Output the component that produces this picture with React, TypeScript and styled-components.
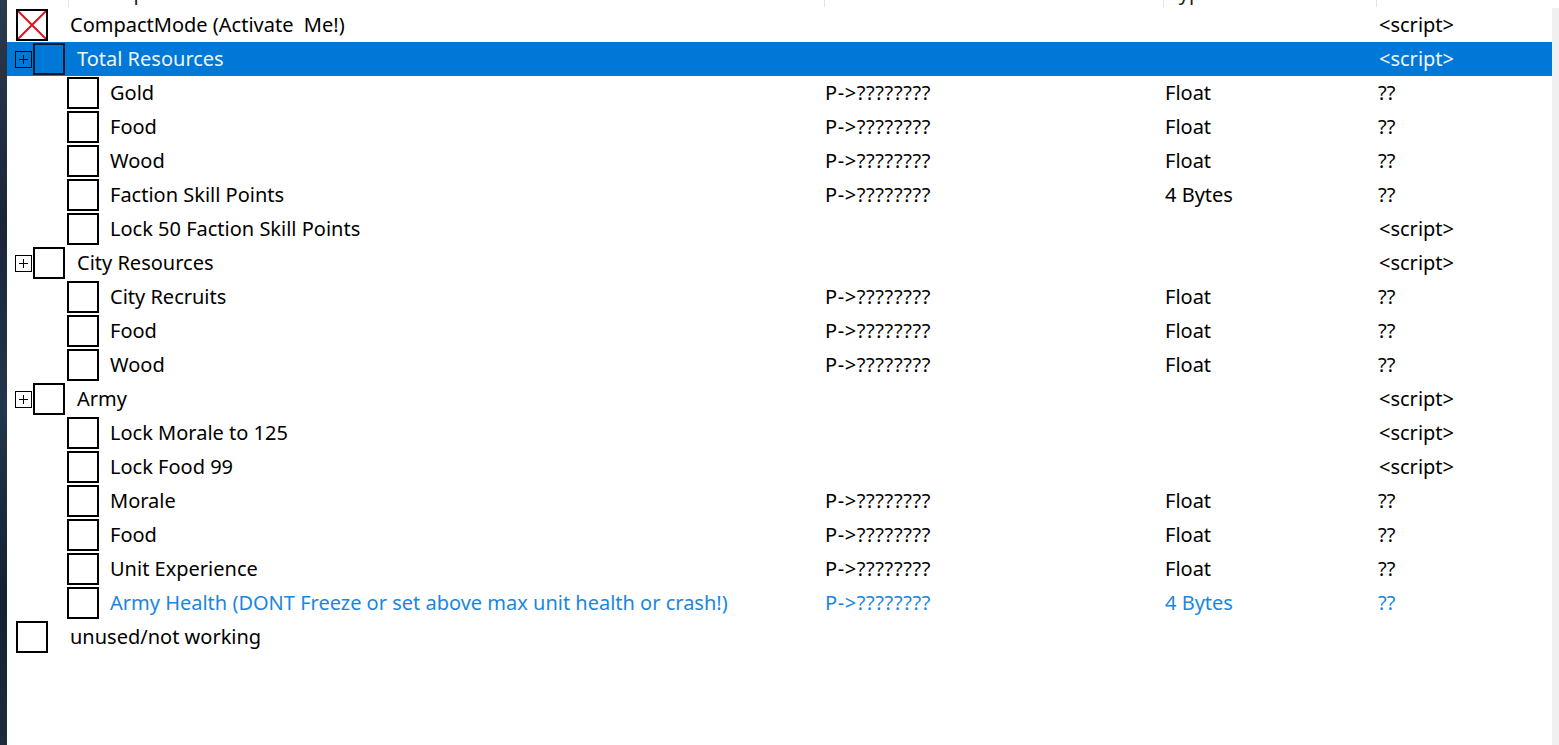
import React from 'react'
import styled, { createGlobalStyle } from 'styled-components'

const GlobalStyle = createGlobalStyle`
  html, body {
    margin: 0;
    padding: 0;
    background: #ffffff;
  }
  body {
    font-family: "Noto Sans", "Open Sans", sans-serif;
    font-size: 20px;
    color: #000;
  }
`

const COLUMNS = '818px 339px 213px 1fr'

type Kind = 'top' | 'group' | 'child'

interface IEntry {
  kind: Kind
  label: string
  address?: string
  type?: string
  value?: string
  checked?: boolean
  selected?: boolean
  tint?: boolean
}

const ptr = 'P->????????'

const entries: IEntry[] = [
  { kind: 'top', label: 'CompactMode (Activate  Me!)', value: '<script>', checked: true },
  { kind: 'group', label: 'Total Resources', value: '<script>', selected: true },
  { kind: 'child', label: 'Gold', address: ptr, type: 'Float', value: '??' },
  { kind: 'child', label: 'Food', address: ptr, type: 'Float', value: '??' },
  { kind: 'child', label: 'Wood', address: ptr, type: 'Float', value: '??' },
  { kind: 'child', label: 'Faction Skill Points', address: ptr, type: '4 Bytes', value: '??' },
  { kind: 'child', label: 'Lock 50 Faction Skill Points', value: '<script>' },
  { kind: 'group', label: 'City Resources', value: '<script>' },
  { kind: 'child', label: 'City Recruits', address: ptr, type: 'Float', value: '??' },
  { kind: 'child', label: 'Food', address: ptr, type: 'Float', value: '??' },
  { kind: 'child', label: 'Wood', address: ptr, type: 'Float', value: '??' },
  { kind: 'group', label: 'Army', value: '<script>' },
  { kind: 'child', label: 'Lock Morale to 125', value: '<script>' },
  { kind: 'child', label: 'Lock Food 99', value: '<script>' },
  { kind: 'child', label: 'Morale', address: ptr, type: 'Float', value: '??' },
  { kind: 'child', label: 'Food', address: ptr, type: 'Float', value: '??' },
  { kind: 'child', label: 'Unit Experience', address: ptr, type: 'Float', value: '??' },
  {
    kind: 'child',
    label: 'Army Health (DONT Freeze or set above max unit health or crash!)',
    address: ptr,
    type: '4 Bytes',
    value: '??',
    tint: true,
  },
  { kind: 'top', label: 'unused/not working' },
]

const Page = styled.div`
  display: flex;
  height: 745px;
  overflow: hidden;
`

const Backdrop = styled.div`
  width: 7px;
  flex-shrink: 0;
  background: linear-gradient(180deg, #2b3a4c 0%, #1a2636 30%, #24364a 55%, #142130 80%, #1d2b3b 100%);
`

const Main = styled.div`
  flex: 1;
  display: flex;
  flex-direction: column;
  min-width: 0;
`

const Header = styled.div`
  height: 8px;
  flex-shrink: 0;
  display: grid;
  grid-template-columns: 62px 756px 339px 213px 1fr;
  overflow: hidden;
`

const HeaderCell = styled.div<{ $pad: number }>`
  height: 7px;
  overflow: hidden;
  padding-left: ${p => p.$pad}px;
  border-right: 1px solid #e3e3e3;
  white-space: nowrap;
  color: #1a1a1a;
  &:last-child {
    border-right: none;
  }
`

const HeaderText = styled.span`
  display: block;
  line-height: 20px;
  margin-top: -17px;
`

const Body = styled.div`
  flex: 1;
  display: flex;
  min-height: 0;
`

const List = styled.div`
  flex: 1;
  display: flex;
  flex-direction: column;
`

const Scrollbar = styled.div`
  width: 7px;
  flex-shrink: 0;
  background: #f0f0f0;
`

const Row = styled.div<{ $selected?: boolean; $tint?: boolean }>`
  height: 34px;
  display: grid;
  grid-template-columns: ${COLUMNS};
  align-items: center;
  background: ${p => (p.$selected ? '#0078d7' : 'transparent')};
  color: ${p => (p.$selected ? '#eef6ff' : p.$tint ? '#1a86e0' : '#000')};
  white-space: pre;
`

const TreeCell = styled.div<{ $kind: Kind }>`
  display: flex;
  align-items: center;
  padding-left: ${p => (p.$kind === 'top' ? 9 : p.$kind === 'group' ? 8 : 60)}px;
  height: 100%;
`

const Expander = styled.div`
  width: 15px;
  height: 15px;
  border: 1px solid #000;
  margin-right: 1px;
  display: flex;
  align-items: center;
  justify-content: center;
`

const Check = styled.div<{ $selected?: boolean }>`
  width: 28px;
  height: 28px;
  border: 2px solid ${p => (p.$selected ? '#0d1a2a' : '#000')};
  flex-shrink: 0;
  display: flex;
`

const Label = styled.span<{ $kind: Kind }>`
  margin-left: ${p => (p.$kind === 'top' ? 22 : p.$kind === 'group' ? 12 : 11)}px;
  margin-top: -2px;
`

const Cell = styled.div<{ $pad?: number; $spaced?: boolean }>`
  padding-left: ${p => p.$pad ?? 0}px;
  padding-bottom: 2px;
  letter-spacing: ${p => (p.$spaced ? '0.6px' : 'normal')};
`

const Plus = () => (
  <svg width="11" height="11" viewBox="0 0 11 11">
    <path d="M5.5 1v9M1 5.5h9" stroke="#000" strokeWidth="1" />
  </svg>
)

const Cross = () => (
  <svg width="28" height="28" viewBox="0 0 28 28">
    <path d="M0 0L28 28M28 0L0 28" stroke="#e0141e" strokeWidth="2" />
  </svg>
)

const Entry: React.FC<{ value: IEntry }> = ({ value }) => (
  <Row $selected={value.selected} $tint={value.tint}>
    <TreeCell $kind={value.kind}>
      {value.kind === 'group' && (
        <Expander>
          <Plus />
        </Expander>
      )}
      <Check $selected={value.selected}>{value.checked && <Cross />}</Check>
      <Label $kind={value.kind}>{value.label}</Label>
    </TreeCell>
    <Cell $spaced>{value.address}</Cell>
    <Cell $pad={1}>{value.type}</Cell>
    <Cell $pad={value.value === '??' ? 1 : 2}>{value.value}</Cell>
  </Row>
)

export default function App() {
  return (
    <>
      <GlobalStyle />
      <Page>
        <Backdrop />
        <Main>
          <Header>
            <HeaderCell $pad={4}><HeaderText>Active</HeaderText></HeaderCell>
            <HeaderCell $pad={6}><HeaderText>Description</HeaderText></HeaderCell>
            <HeaderCell $pad={4}><HeaderText>Address</HeaderText></HeaderCell>
            <HeaderCell $pad={4}><HeaderText>Type</HeaderText></HeaderCell>
            <HeaderCell $pad={4}><HeaderText>Value</HeaderText></HeaderCell>
          </Header>
          <Body>
            <List>
              {entries.map((entry, i) => (
                <Entry key={i} value={entry} />
              ))}
            </List>
            <Scrollbar />
          </Body>
        </Main>
      </Page>
    </>
  )
}
